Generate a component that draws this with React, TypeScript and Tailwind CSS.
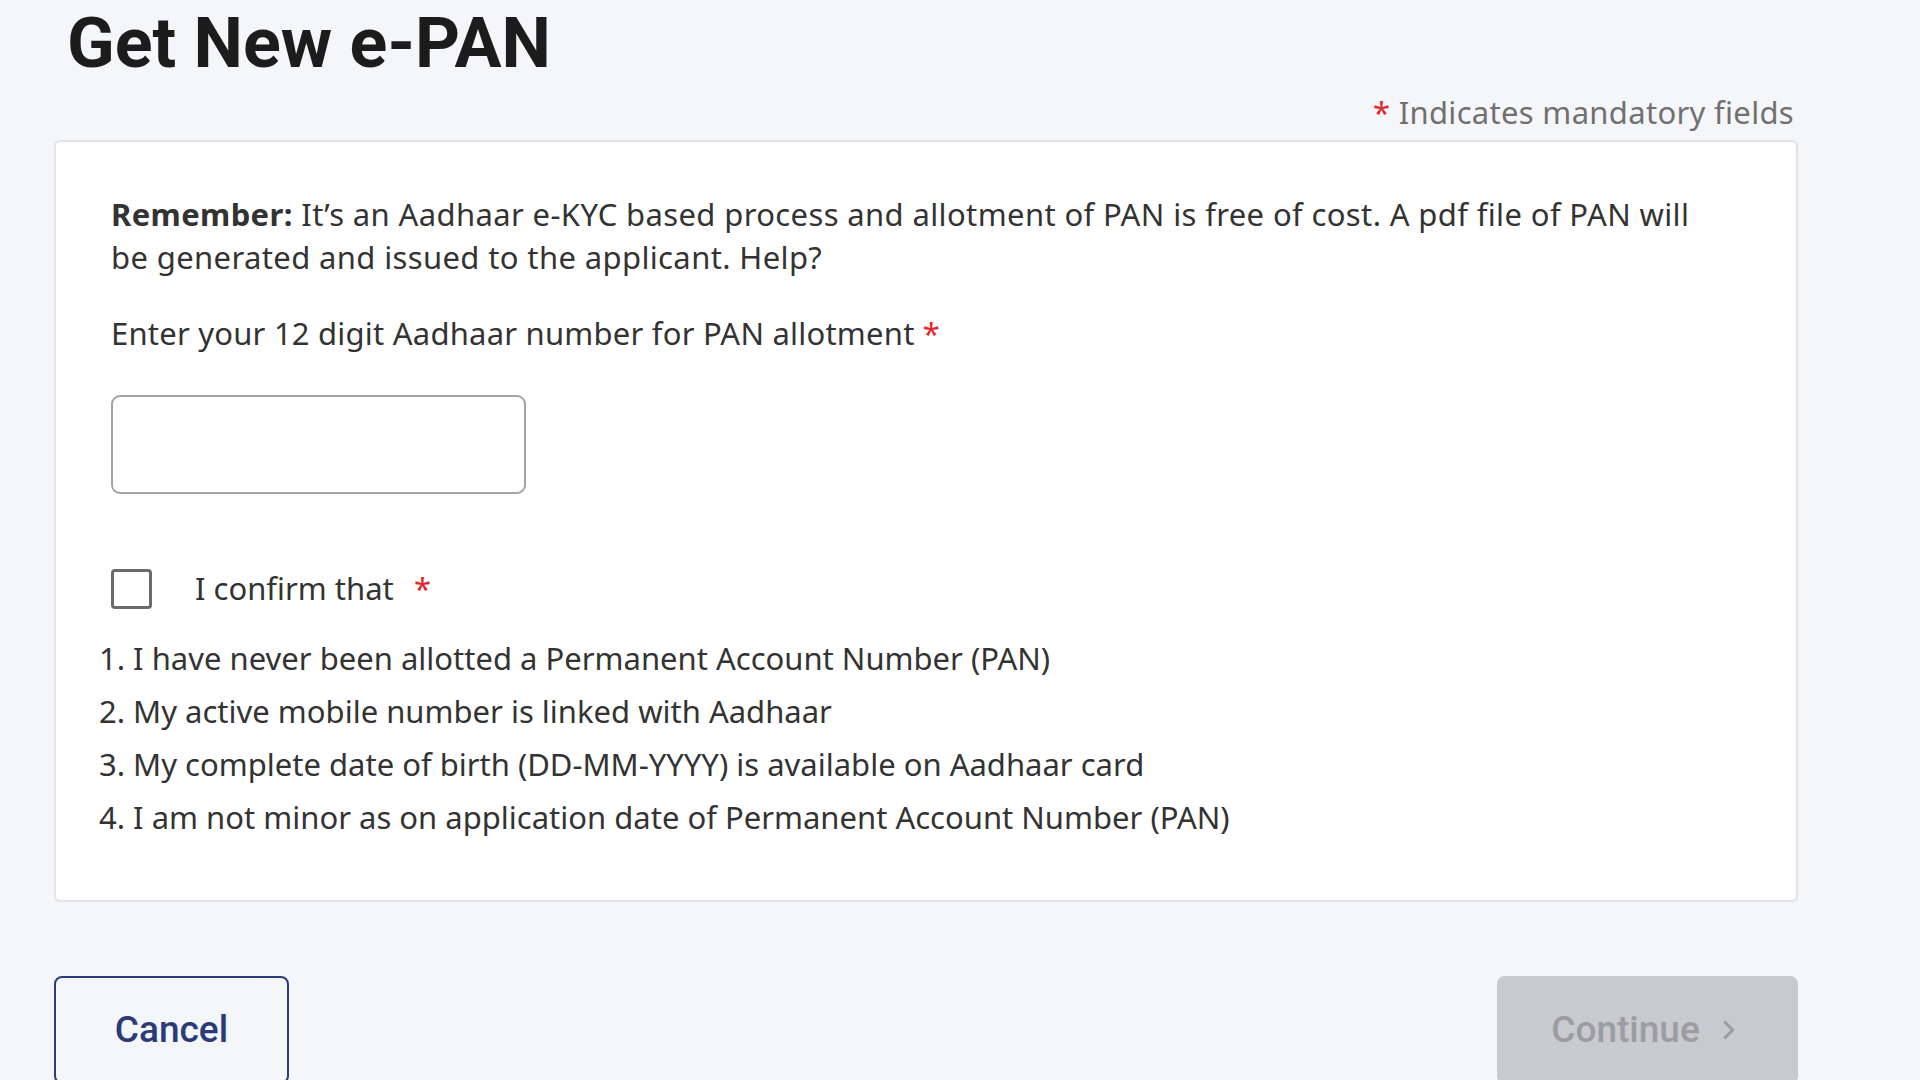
import { ChevronRight } from "lucide-react";

const conditions = [
  "I have never been allotted a Permanent Account Number (PAN)",
  "My active mobile number is linked with Aadhaar",
  "My complete date of birth (DD-MM-YYYY) is available on Aadhaar card",
  "I am not minor as on application date of Permanent Account Number (PAN)",
];

export default function App() {
  return (
    <div className="h-[1080px] overflow-hidden bg-[#f5f6fa] font-['Noto_Sans',sans-serif] text-[#333333]">
      <div className="ml-[54px] w-[1744px]">
        <h1 className="pl-[13px] pt-[1px] font-['Roboto',sans-serif] text-[70px] font-bold leading-[84px] text-[#1c1c1c]">
          Get New e-PAN
        </h1>
        <p className="mt-[6px] pr-[4px] text-right text-[31px] leading-[43px] tracking-[0.01em] text-[#707070]">
          <span className="text-[#e3262b]">*</span> Indicates mandatory fields
        </p>

        {/* form card */}
        <div className="mt-[6px] rounded-md border-2 border-[#e1e3e8] bg-white px-[55px] pb-[56px] pt-[51px] text-[31px] leading-[43px]">
          <p className="tracking-[0.012em]">
            <span className="font-bold">Remember:</span> It&rsquo;s an Aadhaar e-KYC based process and
            allotment of PAN is free of cost. A pdf file of PAN will
            <br />
            be generated and issued to the applicant. Help?
          </p>
          <label htmlFor="aadhaar" className="mt-[33px] block tracking-[0.007em]">
            Enter your 12 digit Aadhaar number for PAN allotment{" "}
            <span className="text-[#e3262b]">*</span>
          </label>
          <input
            id="aadhaar"
            type="text"
            className="mt-[40px] block h-[99px] w-[415px] rounded-[9px] border-2 border-[#a3a3a3] bg-white px-4 outline-none"
          />

          <div className="mt-[73px] flex items-center gap-[43px]">
            <div className="h-[40px] w-[41px] rounded-[4px] border-[3px] border-[#6b6b6b]" />
            <span>
              I confirm that <span className="ml-[12px] text-[#e3262b]">*</span>
            </span>
          </div>

          <ol className="-ml-[12px] mt-[22px] leading-[53px]">
            {conditions.map((c, i) => (
              <li key={i}>
                {i + 1}. {c}
              </li>
            ))}
          </ol>
        </div>

        <div className="mt-[74px] flex justify-between font-['Roboto',sans-serif]">
          <button className="h-[108px] w-[235px] rounded-[8px] border-2 border-[#2c3d7d] text-[37px] font-medium text-[#2a3b78]">
            Cancel
          </button>
          <button
            disabled
            className="flex h-[108px] w-[301px] items-center justify-center gap-[14px] rounded-[8px] bg-[#c9cacd] text-[37px] font-medium text-[#9b9da1]"
          >
            Continue
            <ChevronRight className="h-[30px] w-[30px]" strokeWidth={2.5} />
          </button>
        </div>
      </div>
    </div>
  );
}
